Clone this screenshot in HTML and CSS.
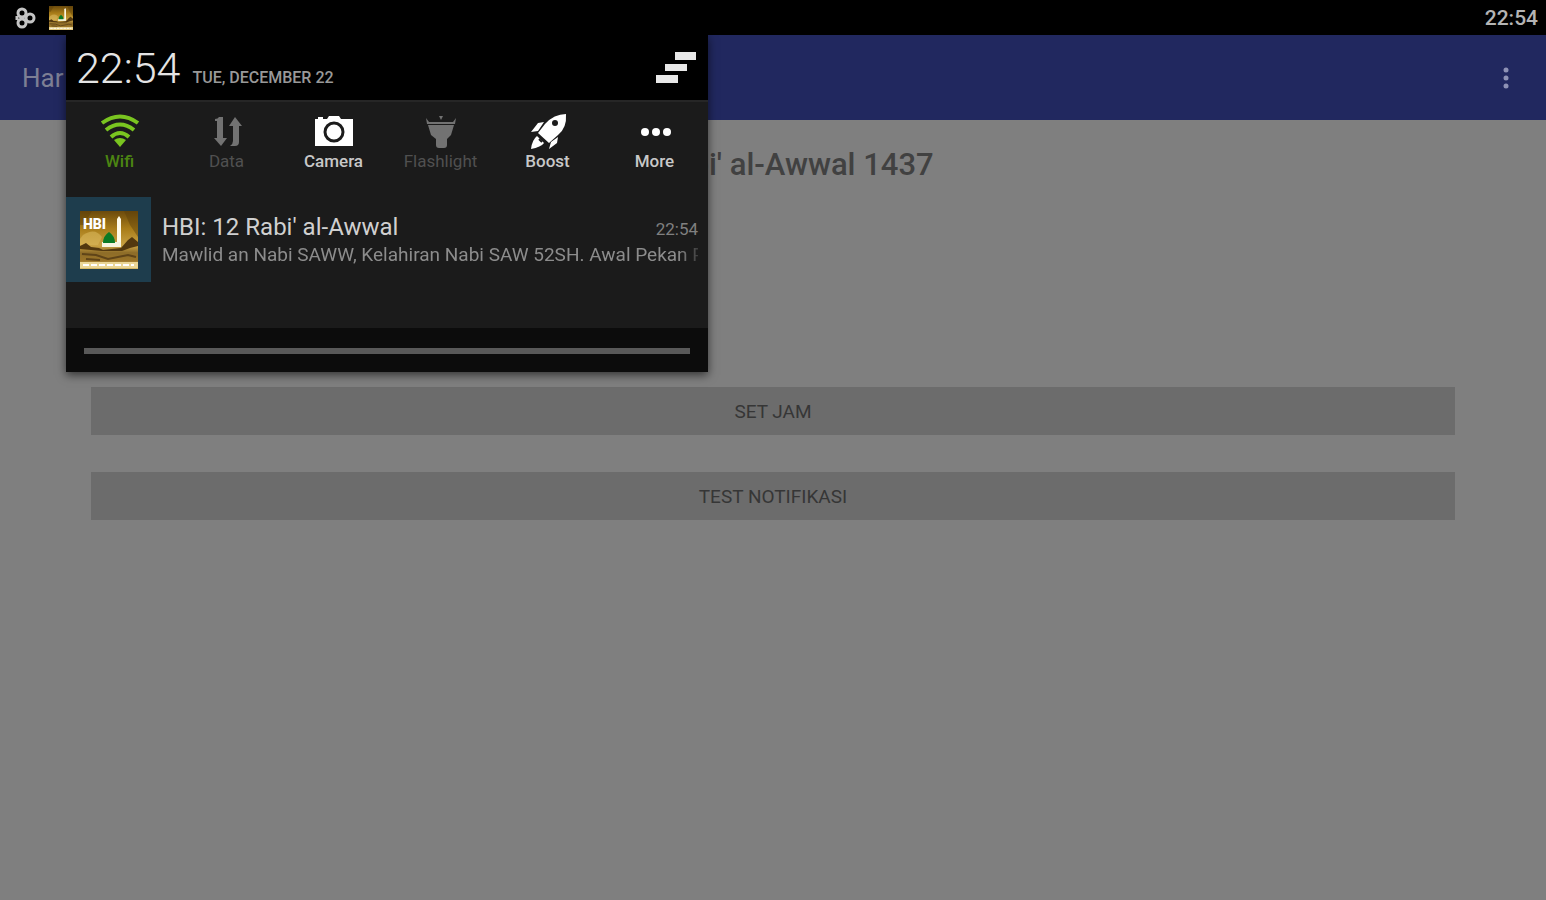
FILE: index.html
```html
<!DOCTYPE html>
<html lang="id">
<head>
  <meta charset="UTF-8">
  <meta name="viewport" content="width=device-width, initial-scale=1.0">
  <title>HBI</title>
  <link rel="stylesheet" href="styles.css">
</head>
<body>
  <!-- app icon, used in the status bar and in the notification -->
  <svg class="defs" width="0" height="0" aria-hidden="true">
    <defs>
      <linearGradient id="gold" x1="0" y1="0" x2="0" y2="1">
        <stop offset="0" stop-color="#6b4a0c"/>
        <stop offset="0.3" stop-color="#a87c18"/>
        <stop offset="0.6" stop-color="#c9a244"/>
        <stop offset="0.72" stop-color="#8d6c28"/>
        <stop offset="0.85" stop-color="#9a7428"/>
        <stop offset="1" stop-color="#d9bd6c"/>
      </linearGradient>
      <symbol id="appIcon" viewBox="0 0 58 58">
        <rect width="58" height="58" fill="url(#gold)"/>
        <path d="M0 0h12l-8 14H0zM44 0h14v26l-8-12z" fill="#5c3d08" opacity=".45"/>
        <path d="M3 24q12-8 19 2l-4 8H0v-6z" fill="#d8b75c" opacity=".6"/>
        <path d="M0 35l6-3 5 4 8 1 4 2 18-2 7-8 4-3 6 5v4l-8 2-8 3-20 0-22-2z" fill="#52380f"/>
        <path d="M2 43l14 1 12 4 20-4 8 2M6 48l14 1" stroke="#5f4418" stroke-width="2" fill="none"/>
        <path d="M37 8l2-3 2 3v25h-4z" fill="#fffbe8"/>
        <path d="M22 31h19v5H22z" fill="#f7f5df"/>
        <path d="M23 32q0-7 6-11 6 4 6 11z" fill="#0b7a24"/>
        <rect y="51" width="58" height="6" fill="#ead696"/>
        <path d="M3 54h51" stroke="#fff" stroke-width="2" stroke-dasharray="6 2"/>
      </symbol>
    </defs>
  </svg>

  <header class="statusbar">
    <div class="status-icons">
      <svg width="22" height="22" viewBox="0 0 22 22" fill="none" stroke="#c4c4c4" stroke-width="3">
        <circle cx="8" cy="6" r="4"/>
        <circle cx="8" cy="16" r="4"/>
        <circle cx="16" cy="11" r="4"/>
        <path d="M3 9v4"/>
      </svg>
      <svg width="24" height="24"><use href="#appIcon"/></svg>
    </div>
    <span class="status-time">22:54</span>
  </header>

  <div class="appbar">
    <span class="app-title">Har</span>
    <button type="button" class="menu-btn" aria-label="Menu">
      <svg width="8" height="24" viewBox="0 0 8 24" fill="#8e92b5">
        <circle cx="4" cy="4" r="2.5"/><circle cx="4" cy="12" r="2.5"/><circle cx="4" cy="20" r="2.5"/>
      </svg>
    </button>
  </div>

  <main class="content">
    <h1>12 Rabi' al-Awwal 1437</h1>
    <button type="button" class="btn">SET JAM</button>
    <button type="button" class="btn">TEST NOTIFIKASI</button>
  </main>

  <!-- notification shade -->
  <section class="shade">
    <div class="shade-head">
      <span class="clock">22:54</span>
      <span class="date">TUE, DECEMBER 22</span>
      <button type="button" class="clear-btn" aria-label="Clear">
        <svg width="40" height="32" viewBox="0 0 40 32" fill="#e8e8e8">
          <path d="M19 0h21v8H19zM9 12h22v7H9zM0 23h22v8H0z"/>
        </svg>
      </button>
    </div>

    <div class="toggles">
      <button type="button" class="toggle on">
        <svg width="40" height="36" viewBox="0 0 40 36">
          <g fill="none" stroke="currentColor" stroke-width="4">
            <path d="M2 10Q20-3 38 10"/>
            <path d="M6 17Q20 6 34 17"/>
            <path d="M11 24Q20 16 29 24"/>
          </g>
          <path d="M14 27q6-4 12 0l-6 7z" fill="currentColor"/>
        </svg>
        <span>Wifi</span>
      </button>
      <button type="button" class="toggle off">
        <svg width="40" height="36" viewBox="0 0 40 36" fill="currentColor">
          <path d="M8 6q3 0 4-2h4v21h4l-6 8-7-8h3V8H8zM28 4l7 9h-3v16q0 4-4 4h-5q3-2 3-5V13h-4z"/>
        </svg>
        <span>Data</span>
      </button>
      <button type="button" class="toggle">
        <svg width="40" height="36" viewBox="0 0 40 36">
          <path d="M1 6h3V4h5v2h4l2-3h10l2 3h12v27H1z" fill="currentColor"/>
          <circle cx="20" cy="19" r="9" fill="none" stroke="#1b1b1b" stroke-width="3"/>
        </svg>
        <span>Camera</span>
      </button>
      <button type="button" class="toggle off">
        <svg width="40" height="36" viewBox="0 0 40 36" fill="currentColor">
          <path d="M5 5l3 4h24l3-4-1 6H6zM7 12h26l-3 10-4 4v6q0 3-3 3h-5q-3 0-3-3v-6l-5-4z"/>
          <path d="M18 3h4l-2 4z"/>
        </svg>
        <span>Flashlight</span>
      </button>
      <button type="button" class="toggle">
        <svg width="40" height="36" viewBox="0 0 40 36" fill="currentColor">
          <path d="M38 1q1 14-8 21l-9 8-11-10 7-9Q26 1 38 1z"/>
          <path d="M16 9l-6 1-7 9 7-1zM30 24l-1 6-8 6 2-7z"/>
          <path d="M9 23l7 7q-3 4-13 6 1-9 6-13z"/>
          <path d="M11 26l3 3" stroke="#1b1b1b" stroke-width="2"/>
          <circle cx="27" cy="10" r="3" fill="#1b1b1b"/>
        </svg>
        <span>Boost</span>
      </button>
      <button type="button" class="toggle">
        <svg width="40" height="36" viewBox="0 0 40 36" fill="currentColor">
          <circle cx="10" cy="19" r="4"/><circle cx="21" cy="19" r="4"/><circle cx="32" cy="19" r="4"/>
        </svg>
        <span>More</span>
      </button>
    </div>

    <article class="notif">
      <div class="notif-icon">
        <svg width="58" height="58">
          <use href="#appIcon"/>
          <text x="3" y="18" class="icon-text">HBI</text>
        </svg>
      </div>
      <div class="notif-body">
        <div class="notif-top">
          <h2>HBI: 12 Rabi' al-Awwal</h2>
          <time>22:54</time>
        </div>
        <p>Mawlid an Nabi SAWW, Kelahiran Nabi SAW 52SH. Awal Pekan P</p>
      </div>
    </article>

    <div class="handle"><div class="handle-line"></div></div>
  </section>
</body>
</html>
```
FILE: styles.css
```css
* {
  box-sizing: border-box;
}
body {
  margin: 0;
  min-height: 100vh;
  background-color: #7f7f7f;
  font-family: Roboto, Arial, sans-serif;
}
button {
  padding: 0;
  border: none;
  background: none;
  font-family: inherit;
  cursor: pointer;
}
svg {
  display: block;
}
.defs {
  position: absolute;
}

/* status bar */
.statusbar {
  display: flex;
  justify-content: space-between;
  align-items: center;
  height: 35px;
  padding: 0 8px 0 14px;
  background-color: #000;
}
.status-icons {
  display: flex;
  align-items: center;
  gap: 13px;
}
.status-time {
  color: #b4b4b4;
  font-size: 21px;
  font-weight: 500;
}

/* app bar */
.appbar {
  display: flex;
  justify-content: space-between;
  align-items: center;
  height: 85px;
  padding: 0 32px 0 22px;
  background-color: #21285f;
}
.app-title {
  color: #7d7f94;
  font-size: 26px;
}
.menu-btn {
  padding: 4px;
}

.content {
  display: flex;
  flex-direction: column;
  gap: 37px;
  padding: 27px 91px;
}
h1 {
  margin: 0 0 167px;
  color: #414141;
  font-size: 31px;
  font-weight: 500;
  line-height: 36px;
  text-align: center;
}
.btn {
  height: 48px;
  background-color: #6c6c6c;
  color: #363636;
  font-size: 19px;
}

/* notification shade */
.shade {
  position: absolute;
  top: 35px;
  left: 66px;
  width: 642px;
  background-color: #1b1b1b;
  box-shadow: 0 3px 9px rgba(0, 0, 0, 0.6);
}
.shade-head {
  display: flex;
  align-items: baseline;
  gap: 12px;
  height: 65px;
  padding: 5px 12px 0 10px;
  background-color: #000;
}
.clock {
  color: #e4e4e4;
  font-size: 43px;
  font-weight: 300;
  line-height: 56px;
}
.date {
  color: #999;
  font-size: 16px;
  font-weight: 500;
}
.clear-btn {
  align-self: flex-start;
  margin: 12px 0 0 auto;
}
.toggles {
  display: grid;
  grid-template-columns: repeat(6, 1fr);
  height: 97px;
  padding-top: 11px;
  border-top: 2px solid #262626;
}
.toggle {
  display: flex;
  flex-direction: column;
  align-items: center;
  justify-content: flex-start;
  gap: 2px;
  color: #fff;
  font-size: 17px;
  font-weight: 500;
  line-height: 20px;
}
.toggle span {
  color: #c8c8c8;
}
.on {
  color: #7ac520;
}
.on span {
  color: #4c8512;
}
.off {
  color: #727272;
}
.off span {
  color: #505050;
  font-weight: 400;
}
.notif {
  display: flex;
  height: 131px;
}
.notif-icon {
  display: flex;
  flex: none;
  align-items: center;
  justify-content: center;
  width: 85px;
  height: 85px;
  background-color: #1e3d4d;
}
.icon-text {
  fill: #fff;
  font-size: 14px;
  font-weight: 900;
}
.notif-body {
  flex: 1;
  min-width: 0;
  padding: 15px 10px 0 11px;
}
.notif-top {
  display: flex;
  justify-content: space-between;
  align-items: baseline;
}
.notif h2 {
  margin: 0;
  color: #d0d0d0;
  font-size: 24px;
  font-weight: 400;
  line-height: 30px;
}
.notif time {
  color: #808080;
  font-size: 17px;
}
.notif p {
  margin: 0;
  overflow: hidden;
  color: #8c8c8c;
  font-size: 19px;
  line-height: 26px;
  white-space: nowrap;
  -webkit-mask-image: linear-gradient(to left, rgba(0, 0, 0, 0.3), #000 20px);
  mask-image: linear-gradient(to left, rgba(0, 0, 0, 0.3), #000 20px);
}
.handle {
  padding: 20px 18px 18px;
  background-color: #0c0c0c;
}
.handle-line {
  height: 6px;
  background-color: #595959;
}
```
